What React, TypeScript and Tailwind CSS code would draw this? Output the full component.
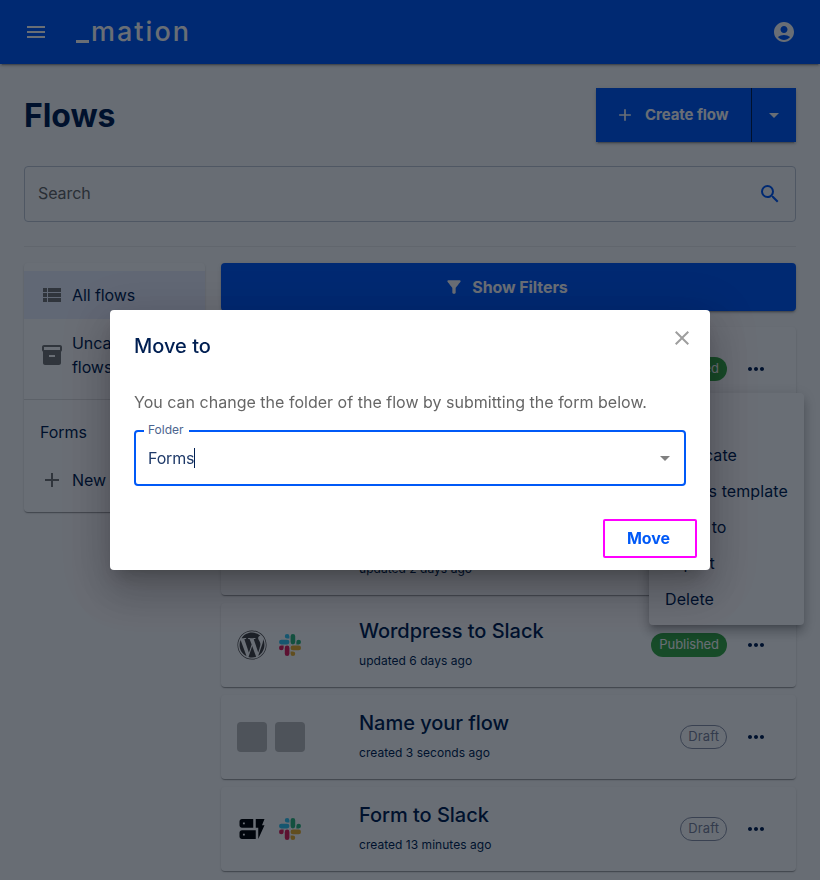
import type { ReactNode } from "react";
import {
  MdAccountCircle,
  MdAdd,
  MdArrowDropDown,
  MdClose,
  MdDynamicForm,
  MdFilterAlt,
  MdInventory2,
  MdMenu,
  MdMoreHoriz,
  MdSearch,
  MdViewList,
} from "react-icons/md";
import { FaWordpress } from "react-icons/fa";

type Flow = {
  name: string;
  date: string;
  status: "Published" | "Draft";
  apps: string[];
};

const flows: Flow[] = [
  { name: "Typeform to Sheets", date: "updated 2 hours ago", status: "Published", apps: ["form", "slack"] },
  { name: "RSS to Slack", date: "updated a day ago", status: "Published", apps: ["empty", "slack"] },
  { name: "Form to Wordpress", date: "updated 2 days ago", status: "Published", apps: ["form", "wordpress"] },
  { name: "Wordpress to Slack", date: "updated 6 days ago", status: "Published", apps: ["wordpress", "slack"] },
  { name: "Name your flow", date: "created 3 seconds ago", status: "Draft", apps: ["empty", "empty"] },
  { name: "Form to Slack", date: "created 13 minutes ago", status: "Draft", apps: ["form", "slack"] },
];

const menuItems = ["View", "Duplicate", "Use as template", "Move to", "Export", "Delete"];

const paperShadow =
  "shadow-[0_2px_1px_-1px_rgba(0,0,0,0.2),0_1px_1px_0_rgba(0,0,0,0.14),0_1px_3px_0_rgba(0,0,0,0.12)]";
const buttonShadow =
  "shadow-[0_3px_1px_-2px_rgba(0,0,0,0.2),0_2px_2px_0_rgba(0,0,0,0.14),0_1px_5px_0_rgba(0,0,0,0.12)]";

function SlackIcon() {
  return (
    <svg viewBox="0 0 122.8 122.8" className="w-[22px] h-[22px]">
      <path fill="#e01e5a" d="M25.8 77.6a12.9 12.9 0 1 1-12.9-12.9h12.9zM32.3 77.6a12.9 12.9 0 0 1 25.8 0v32.3a12.9 12.9 0 0 1-25.8 0z" />
      <path fill="#36c5f0" d="M45.2 25.8a12.9 12.9 0 1 1 12.9-12.9v12.9zM45.2 32.3a12.9 12.9 0 0 1 0 25.8H12.9a12.9 12.9 0 0 1 0-25.8z" />
      <path fill="#2eb67d" d="M97 45.2a12.9 12.9 0 1 1 12.9 12.9H97zM90.5 45.2a12.9 12.9 0 0 1-25.8 0V12.9a12.9 12.9 0 0 1 25.8 0z" />
      <path fill="#ecb22e" d="M77.6 97a12.9 12.9 0 1 1-12.9 12.9V97zM77.6 90.5a12.9 12.9 0 0 1 0-25.8h32.3a12.9 12.9 0 0 1 0 25.8z" />
    </svg>
  );
}

function AppIcon({ app }: { app: string }) {
  return (
    <div
      className={`w-[30px] h-[30px] rounded flex items-center justify-center ${
        app === "empty" ? "bg-[#bdbdbd]" : ""
      }`}
    >
      {app === "wordpress" && <FaWordpress className="w-[30px] h-[30px] text-[#464342]" />}
      {app === "slack" && <SlackIcon />}
      {app === "form" && <MdDynamicForm className="w-[30px] h-[30px] text-black" />}
    </div>
  );
}

function FlowRow({ flow }: { flow: Flow }) {
  return (
    <div className={`h-[84px] shrink-0 rounded bg-white pl-4 pr-5 flex items-center ${paperShadow}`}>
      <div className="w-[122px] flex gap-2">
        {flow.apps.map((app, i) => (
          <AppIcon key={i} app={app} />
        ))}
      </div>
      <div className="flex-1 h-[52px] flex flex-col justify-between">
        <h6 className="text-xl leading-6 font-medium tracking-[-0.002em]">{flow.name}</h6>
        <span className="text-xs leading-5 tracking-[0.003em]">{flow.date}</span>
      </div>
      <span
        className={`h-6 rounded-full text-[13px] flex items-center mr-[9px] ${
          flow.status === "Published"
            ? "bg-[#38ab46] text-white px-2 tracking-[-0.006em]"
            : "border border-[#8c93a8] text-[#7c839b] px-[7px] tracking-[0.009em]"
        }`}
      >
        {flow.status}
      </span>
      <button className="w-10 h-10 flex items-center justify-center">
        <MdMoreHoriz className="w-6 h-6" />
      </button>
    </div>
  );
}

function FolderItem({ icon, children, selected }: { icon?: ReactNode; children: ReactNode; selected?: boolean }) {
  return (
    <div className={`flex items-center px-4 py-3 ${selected ? "bg-[#ebf0fe]" : ""}`}>
      {icon && <span className="w-8 text-2xl text-[#757575]">{icon}</span>}
      <span className="flex-1">{children}</span>
    </div>
  );
}

function MoveDialog() {
  return (
    <div className="fixed inset-0 z-20 flex items-center justify-center bg-[rgba(0,8,20,0.59)]">
      <div className="relative w-[600px] h-[260px] rounded bg-white px-6 pt-5 flex flex-col shadow-[0_11px_15px_-7px_rgba(0,0,0,0.2),0_24px_38px_3px_rgba(0,0,0,0.14),0_9px_46px_8px_rgba(0,0,0,0.12)]">
        <h2 className="text-xl leading-8 font-medium tracking-normal">Move to</h2>
        <button className="absolute right-4 top-4 text-[#9e9e9e]">
          <MdClose className="w-6 h-6" />
        </button>
        <p className="mt-7 text-[#666666] tracking-[0.001em]">
          You can change the folder of the flow by submitting the form below.
        </p>
        <div className="relative mt-4 h-14 rounded border-2 border-[#0059f7] px-3 flex items-center">
          <span className="absolute left-2 -top-[10px] bg-white pl-1 pr-[5px] text-xs leading-4 text-[#4d648e] tracking-normal">
            Folder
          </span>
          <span className="text-[#1f3a69] tracking-[-0.01em]">Forms</span>
          <span className="w-px h-5 bg-[#001f52]" />
          <MdArrowDropDown className="ml-auto -mr-[5px] w-6 h-6 text-[#808080]" />
        </div>
        <button className="self-end mt-[33px] -mr-[11px] w-[94px] h-[39px] pb-px pr-[3px] border-2 border-[#ff00ff] rounded-[2px] text-[#0059f7] font-bold tracking-[-0.005em]">
          Move
        </button>
      </div>
    </div>
  );
}

export default function App() {
  return (
    <div className="relative h-screen overflow-hidden bg-[#fdfdfd] text-[#001f52] font-['Inter',sans-serif] text-base tracking-[-0.005em]">
      <header className={`relative h-16 bg-[#0059f7] px-6 flex items-center text-white ${buttonShadow}`}>
        <MdMenu className="w-6 h-6" />
        <div className="ml-7 flex items-end">
          <span className="w-[13px] h-[3px] mb-[5px] mr-[2px] bg-white" />
          <span className="text-[27px] leading-[32px] font-medium tracking-[0.075em]">mation</span>
        </div>
        <MdAccountCircle className="ml-auto w-6 h-6" />
      </header>

      <main className="px-6 pt-6">
        <div className="flex items-center justify-between">
          <h1 className="pt-[2px] text-[32px] font-bold tracking-[-0.002em]">Flows</h1>
          <div className={`h-[54px] flex bg-[#0059f7] text-white font-bold ${buttonShadow}`}>
            <button className="w-[156px] flex items-center pl-[19px] gap-[10px] border-r border-[#001f52] text-[15px]">
              <MdAdd className="w-5 h-5" />
              <span>Create flow</span>
            </button>
            <button className="w-11 flex items-center justify-center">
              <MdArrowDropDown className="w-6 h-6" />
            </button>
          </div>
        </div>

        <div className="mt-6 h-14 rounded border border-[#bfc7d4] pl-[13px] pr-[13px] flex items-center justify-between">
          <span className="pb-[2px] text-[#666666]">Search</span>
          <MdSearch className="w-6 h-6 text-[#0059f7]" />
        </div>

        <div className="mt-6 border-t border-[#ebebeb]" />

        <div className="mt-4 flex items-start gap-4">
          <aside className={`w-[181px] rounded bg-white ${paperShadow}`}>
            <div className="py-2 border-b border-[#e0e0e0]">
              <FolderItem icon={<MdViewList />} selected>
                All flows
              </FolderItem>
              <FolderItem icon={<MdInventory2 />}>Uncategorized flows</FolderItem>
            </div>
            <div className="py-2">
              <FolderItem>Forms</FolderItem>
              <FolderItem icon={<MdAdd />}>New folder</FolderItem>
            </div>
          </aside>

          <section className="flex-1">
            <button
              className={`w-full h-12 pr-[5px] rounded bg-[#0059f7] text-white font-bold flex items-center justify-center gap-2 ${buttonShadow}`}
            >
              <MdFilterAlt className="w-5 h-5" />
              Show Filters
            </button>
            <div className="mt-4 flex flex-col gap-2">
              {flows.map((flow) => (
                <FlowRow key={flow.name} flow={flow} />
              ))}
            </div>
          </section>
        </div>
      </main>

      {/* Context menu of the first flow */}
      <ul className="absolute z-10 left-[649px] top-[393px] w-[155px] py-2 rounded bg-white tracking-[0.005em] shadow-[0_5px_5px_-3px_rgba(0,0,0,0.2),0_8px_10px_1px_rgba(0,0,0,0.14),0_3px_14px_2px_rgba(0,0,0,0.12)]">
        {menuItems.map((item) => (
          <li key={item} className="h-9 px-4 flex items-center whitespace-nowrap">
            {item}
          </li>
        ))}
      </ul>

      <MoveDialog />
    </div>
  );
}
